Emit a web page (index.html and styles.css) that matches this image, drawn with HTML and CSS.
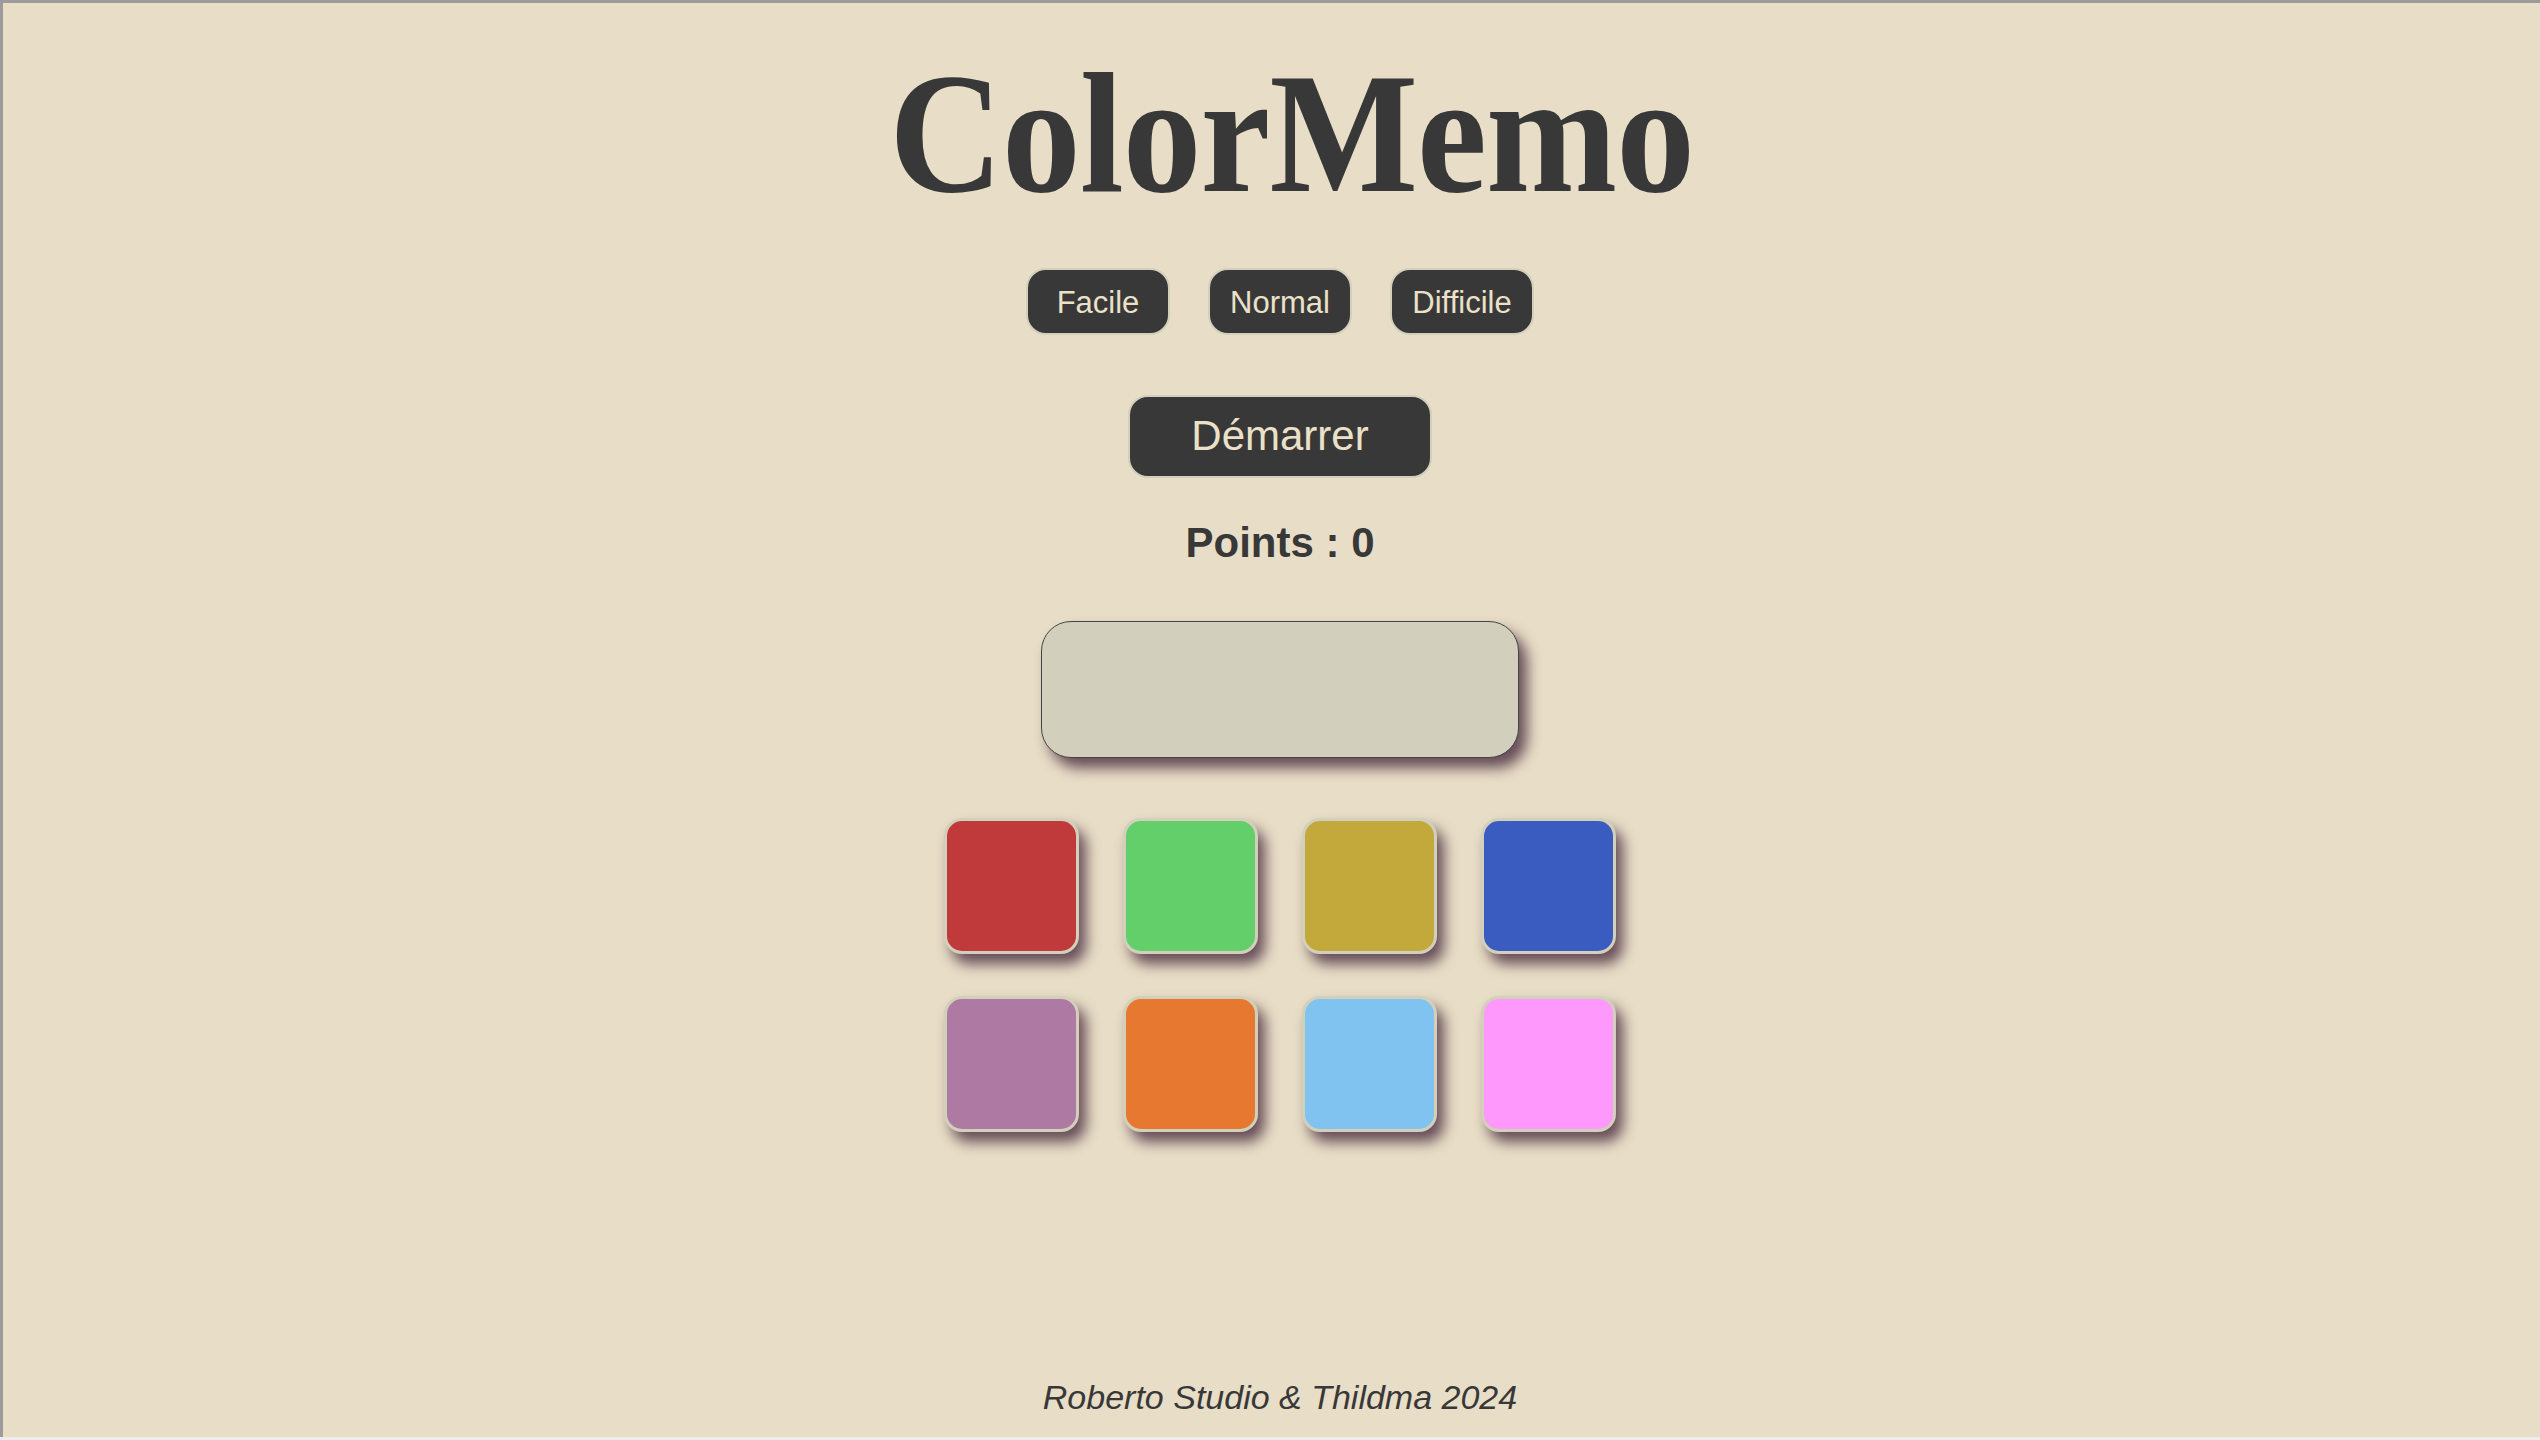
FILE: index.html
```html
<!DOCTYPE html>
<html lang="fr">
<head>
<meta charset="utf-8">
<title>ColorMemo</title>
<link rel="stylesheet" href="styles.css">
</head>
<body>
<div class="frame">
  <h1 class="title">ColorMemo</h1>
  <div class="levels">
    <button class="level">Facile</button>
    <button class="level">Normal</button>
    <button class="level">Difficile</button>
  </div>
  <button class="start">Démarrer</button>
  <div class="points">Points : 0</div>
  <div class="display"></div>
  <div class="tiles">
    <div class="tile red"></div>
    <div class="tile green"></div>
    <div class="tile gold"></div>
    <div class="tile blue"></div>
    <div class="tile purple"></div>
    <div class="tile orange"></div>
    <div class="tile sky"></div>
    <div class="tile pink"></div>
  </div>
  <footer class="footer">Roberto Studio &amp; Thildma 2024</footer>
</div>
</body>
</html>
```
FILE: styles.css
```css
html, body {
  margin: 0;
  padding: 0;
  overflow: hidden;
}
body {
  background: #ececec;
  height: 1440px;
}
.frame {
  width: 2554px;
  height: 1434px;
  border-top: 3px solid #9b9b9b;
  border-left: 3px solid #9b9b9b;
  background: #e8dec7;
  display: flex;
  flex-direction: column;
  align-items: center;
  color: #383838;
  font-family: "Liberation Sans", Arial, sans-serif;
}
.title {
  margin: 44px 0 0 24px;
  font-family: "Liberation Serif", "Times New Roman", serif;
  font-weight: bold;
  font-size: 172px;
  line-height: 172px;
  letter-spacing: -1px;
  transform: scaleX(0.915);
  color: #383838;
}
.levels {
  margin-top: 49px;
  display: flex;
  gap: 38px;
}
.level {
  width: 144px;
  box-sizing: border-box;
  background: #383838;
  color: #ebe1c9;
  border: 2px solid #d2cfbb;
  border-radius: 20px;
  font-family: "Liberation Sans", Arial, sans-serif;
  font-size: 31px;
  line-height: 35px;
  padding: 15px 0 13px;
}
.start {
  margin-top: 60px;
  width: 304px;
  box-sizing: border-box;
  background: #383838;
  color: #ebe1c9;
  border: 2px solid #d2cfbb;
  border-radius: 20px;
  font-family: "Liberation Sans", Arial, sans-serif;
  font-size: 42px;
  line-height: 48px;
  padding: 15px 0 16px;
}
.points {
  margin-top: 41px;
  font-size: 42px;
  line-height: 48px;
  font-weight: bold;
}
.display {
  margin-top: 54px;
  width: 478px;
  height: 137px;
  box-sizing: border-box;
  background: #d2d0bd;
  border: 1px solid #444;
  border-radius: 30px;
  box-shadow: 8px 10px 14px rgba(80, 50, 68, 0.85);
}
.tiles {
  margin-top: 60px;
  display: grid;
  grid-template-columns: repeat(4, 135px);
  grid-auto-rows: 136px;
  column-gap: 44px;
  row-gap: 42px;
}
.tile {
  box-sizing: border-box;
  border: 3px solid #d2cfbb;
  border-radius: 18px;
  box-shadow: 7px 10px 14px rgba(80, 50, 68, 0.85);
}
.red { background: #c0393b; }
.green { background: #62cf6a; }
.gold { background: #c3a93b; }
.blue { background: #3a5bc0; }
.purple { background: #ae79a3; }
.orange { background: #e7782f; }
.sky { background: #81c3f0; }
.pink { background: #ff98fd; }
.footer {
  margin-top: auto;
  margin-bottom: 20px;
  font-size: 34px;
  line-height: 40px;
  font-style: italic;
  color: #383838;
}
```
